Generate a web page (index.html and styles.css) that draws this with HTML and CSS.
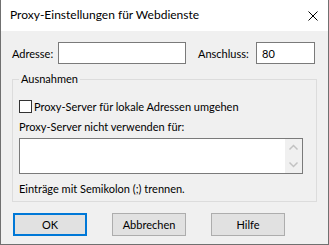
FILE: index.html
```html
<html>

<head>
    <title>Proxy-Einstellungen für Webdienste</title>
    <link rel="stylesheet" href="styles.css">
</head>

<body>
    <div class="window">
        <div class="titlebar">
            <span class="title">Proxy-Einstellungen für Webdienste</span>
            <svg class="close" width="10" height="10" viewBox="0 0 10 10">
                <path d="M0.5 0.5 L9.5 9.5 M9.5 0.5 L0.5 9.5" stroke="#000" stroke-width="1" fill="none" />
            </svg>
        </div>
        <div class="content">
            <div class="row">
                <label class="lbl-addr">Adresse:</label>
                <input class="field addr" type="text" value="" />
                <label class="lbl-port">Anschluss:</label>
                <input class="field port" type="text" value="80" />
            </div>
            <fieldset class="group">
                <legend>Ausnahmen</legend>
                <div class="check">
                    <span class="box"></span>
                    <span>Proxy-Server für lokale Adressen umgehen</span>
                </div>
                <div class="caption">Proxy-Server nicht verwenden für:</div>
                <div class="memo">
                    <div class="memo-text"></div>
                    <div class="scroll">
                        <svg width="17" height="34" viewBox="0 0 17 34">
                            <path d="M4.5 10.5 L8.5 6.5 L12.5 10.5" stroke="#c2c2c2" stroke-width="1.5" fill="none" />
                            <path d="M4.5 23.5 L8.5 27.5 L12.5 23.5" stroke="#c2c2c2" stroke-width="1.5" fill="none" />
                        </svg>
                    </div>
                </div>
                <div class="note">Einträge mit Semikolon (;) trennen.</div>
            </fieldset>
            <div class="buttons">
                <button class="btn default">OK</button>
                <button class="btn">Abbrechen</button>
                <button class="btn">Hilfe</button>
            </div>
        </div>
    </div>
</body>

</html>
```

FILE: styles.css
```css
body {
    margin: 0;
    font-family: Lato, "Liberation Sans", sans-serif;
    font-size: 11px;
    color: #000;
}

.window {
    width: 327px;
    height: 244px;
    border: 1px solid #707070;
    border-top: none;
    background-color: #f0f0f0;
    display: flex;
    flex-direction: column;
}

.titlebar {
    height: 31px;
    background-color: #fff;
    display: flex;
    align-items: center;
    padding: 0 10px 0 9px;
    justify-content: space-between;
}

/*title bar font is one step bigger than the dialog font*/
.title {
    font-size: 12px;
    line-height: 16px;
    margin-top: -1px;
}

.close {
    margin-top: 1px;
}

.content {
    padding: 11px 11px 0 11px;
}

.row {
    display: flex;
    align-items: center;
    height: 22px;
}

.lbl-addr {
    width: 46px;
}

.lbl-port {
    width: 58px;
    margin-left: 12px;
}

/*plain windows edit boxes*/
.field {
    height: 22px;
    border: 1px solid #7a7a7a;
    background-color: #fff;
    font-family: inherit;
    font-size: 11px;
    padding: 0 5px;
    margin: 0;
    outline: none;
    box-sizing: border-box;
}

.addr {
    width: 128px;
}

.port {
    width: 59px;
}

.group {
    margin: 7px 0 0 0;
    width: 305px;
    height: 131px;
    box-sizing: border-box;
    border: 1px solid #dcdcdc;
    padding: 0 6px;
}

.group legend {
    padding: 0 2px;
    margin-left: 0;
    line-height: 16px;
}

.check {
    display: flex;
    align-items: center;
    margin-top: 13px;
    height: 13px;
    line-height: 16px;
}

.box {
    width: 11px;
    height: 11px;
    border: 1px solid #333;
    background-color: #fff;
    margin-right: 2px;
}

.caption {
    margin-top: 6px;
    line-height: 16px;
}

.memo {
    margin-top: 3px;
    width: 284px;
    height: 36px;
    box-sizing: border-box;
    border: 1px solid #7a7a7a;
    background-color: #fff;
    display: flex;
    justify-content: flex-end;
}

.scroll {
    width: 17px;
    height: 34px;
    background-color: #f0f0f0;
}

.note {
    margin-top: 7px;
    line-height: 16px;
}

.buttons {
    display: flex;
    gap: 25px;
    margin-top: 11px;
    padding-left: 1px;
}

.btn {
    width: 74px;
    height: 23px;
    box-sizing: border-box;
    border: 1px solid #adadad;
    background-color: #e1e1e1;
    font-family: inherit;
    font-size: 11px;
    color: #000;
    padding: 0;
}

.btn.default {
    border: 2px solid #0078d7;
}
```
